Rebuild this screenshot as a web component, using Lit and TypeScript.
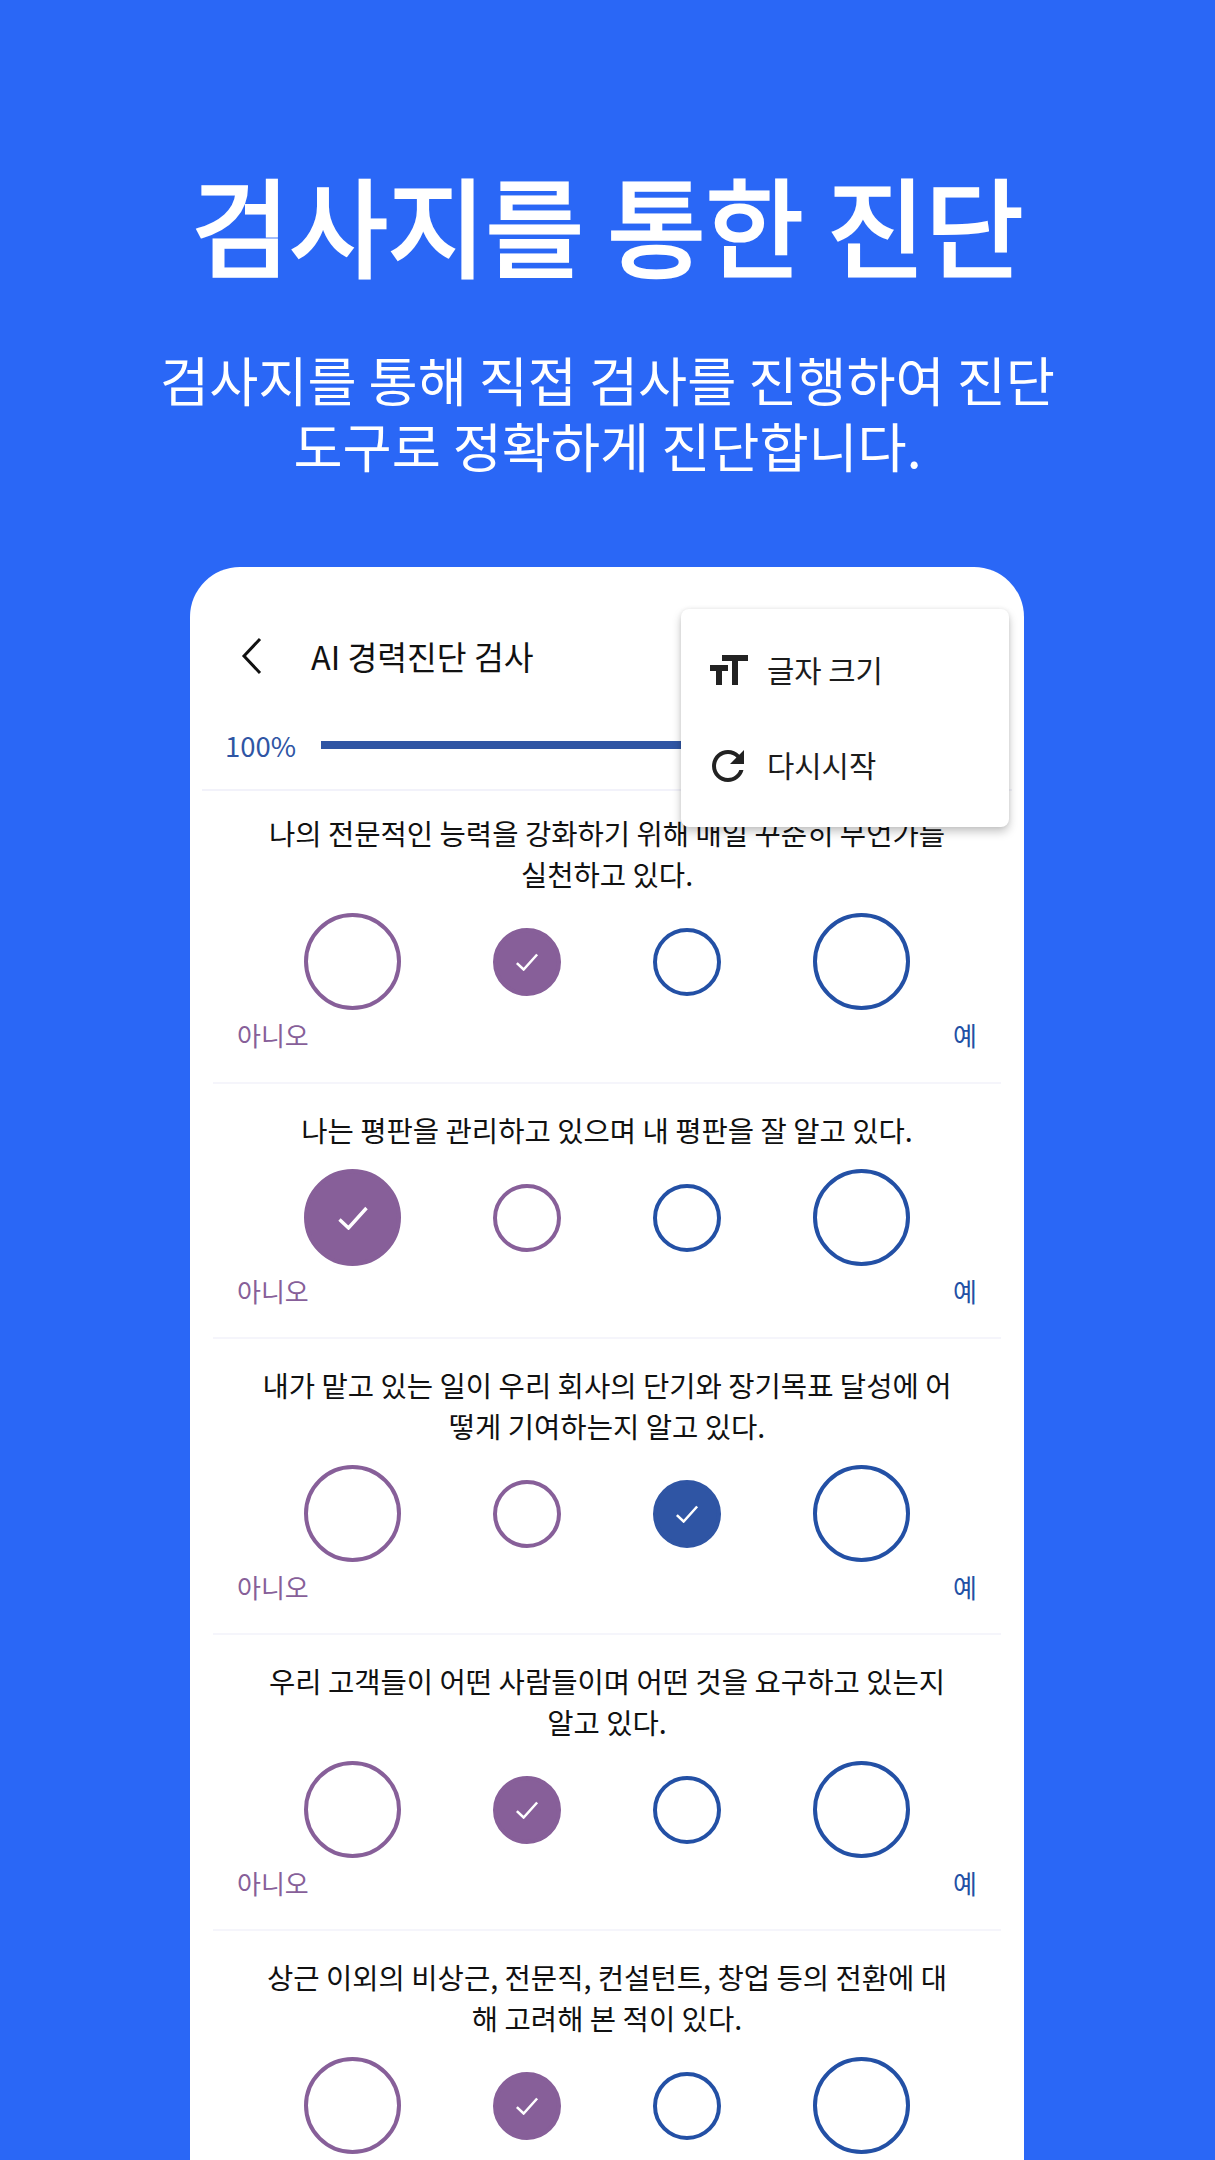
import { LitElement, html, css, svg } from "lit";
import { customElement } from "lit/decorators.js";
import { classMap } from "lit/directives/class-map.js";

interface Question { lines: string[]; picked: number; labels: boolean; }

const QUESTIONS: Question[] = [
  { lines: ["나의 전문적인 능력을 강화하기 위해 매일 꾸준히 무언가를", "실천하고 있다."], picked: 1, labels: true },
  { lines: ["나는 평판을 관리하고 있으며 내 평판을 잘 알고 있다."], picked: 0, labels: true },
  { lines: ["내가 맡고 있는 일이 우리 회사의 단기와 장기목표 달성에 어", "떻게 기여하는지 알고 있다."], picked: 2, labels: true },
  { lines: ["우리 고객들이 어떤 사람들이며 어떤 것을 요구하고 있는지", "알고 있다."], picked: 1, labels: true },
  { lines: ["상근 이외의 비상근, 전문직, 컨설턴트, 창업 등의 전환에 대", "해 고려해 본 적이 있다."], picked: 1, labels: false },
];

const check = svg`<path d="M3 13.5 L12 22 L30 2" fill="none" stroke="#fff" stroke-width="3.4"/>`;

@customElement("app-root")
export class AppRoot extends LitElement {
  static styles = css`
    :host {
      display: block;
      width: 1215px;
      height: 2160px;
      overflow: hidden;
      background: #2a67f6;
      font-family: "Noto Sans CJK KR", "Noto Sans", sans-serif;
      color: #111;
    }
    .hero { padding-top: 163px; text-align: center; color: #fff; }
    h1 { margin: 0; font-size: 106.5px; line-height: 120px; font-weight: 400; -webkit-text-stroke: 3.2px #fff; }
    .sub { margin: 63px 0 0; font-size: 53.4px; line-height: 66px; font-weight: 400; }
    .card {
      position: relative;
      width: 834px;
      margin: 89px 0 0 190px;
      background: #fff;
      border-radius: 50px 50px 0 0;
      padding-top: 1px;
    }
    .top { display: flex; align-items: center; height: 45px; padding: 65px 0 0 50px; }
    .top svg { width: 24px; height: 38px; display: block; }
    .top span { margin-left: 47px; font-size: 32.4px; line-height: 45px; }
    .progress {
      display: flex;
      align-items: center;
      gap: 25px;
      height: 36px;
      padding: 49px 35px 26px 23px;
      margin: 0 12px;
      border-bottom: 2px solid #f2f2fa;
    }
    .progress .pct { font-size: 27.5px; color: #2f55a4; line-height: 36px; }
    .progress .bar { flex: 1; height: 8px; background: #2f55a4; }
    .menu {
      position: absolute;
      top: 42px;
      left: 491px;
      width: 328px;
      box-sizing: border-box;
      padding: 14px 0;
      background: #fff;
      border-radius: 8px;
      box-shadow: 0 5px 10px rgba(0,0,0,.22), 0 0 4px rgba(0,0,0,.08);
    }
    .item { display: flex; align-items: center; height: 95px; padding-left: 23px; gap: 15px; font-size: 29.7px; color: #1c1c1c; }
    .item span { position: relative; top: -1px; }
    .item svg { width: 48px; height: 48px; fill: #222; display: block; }
    .row { margin: 0 23px; padding: 25px 0 28px; border-bottom: 2px solid #f5f5fb; }
    .row.first { padding: 21px 0 29px; }
    .q { margin: 0; text-align: center; font-size: 28.6px; line-height: 41px; color: #111; }
    .dots { display: flex; justify-content: center; align-items: center; gap: 92px; margin-top: 19px; }
    .dot {
      box-sizing: border-box;
      width: 68px;
      height: 68px;
      border-radius: 50%;
      border: 4.5px solid;
      display: flex;
      align-items: center;
      justify-content: center;
    }
    .dot.big { width: 97px; height: 97px; }
    .dot.p { border-color: #875f99; }
    .dot.b { border-color: #2350a5; }
    .dot.p.on { background: #875f99; }
    .dot.b.on { background: #2f55a4; border-color: #2f55a4; }
    .dot svg { width: 26px; height: 18px; display: block; }
    .dot.big svg { width: 34px; height: 24px; }
    .labels { display: flex; justify-content: space-between; padding: 0 24px; margin-top: 7px; font-size: 26px; line-height: 36px; }
    .no { color: #875f99; }
    .yes { color: #2350a5; }
  `;

  private dot(i: number, picked: number) {
    const cls = { dot: true, big: i === 0 || i === 3, p: i < 2, b: i >= 2, on: i === picked };
    return html`<div class=${classMap(cls)}>
      ${i === picked ? html`<svg viewBox="0 0 33 24">${check}</svg>` : ""}
    </div>`;
  }

  render() {
    return html`
      <div class="hero">
        <h1>검사지를 통한 진단</h1>
        <p class="sub">검사지를 통해 직접 검사를 진행하여 진단<br />도구로 정확하게 진단합니다.</p>
      </div>
      <div class="card">
        <div class="top">
          <svg viewBox="0 0 24 38"><path d="M20 2 L4 19 L20 36" fill="none" stroke="#111" stroke-width="3"/></svg>
          <span>AI 경력진단 검사</span>
        </div>
        <div class="progress">
          <span class="pct">100%</span>
          <div class="bar"></div>
        </div>
        ${QUESTIONS.map((q, n) => html`
          <div class=${classMap({ row: true, first: n === 0 })}>
            <p class="q">${q.lines.map((l, i) => html`${i ? html`<br />` : ""}${l}`)}</p>
            <div class="dots">${[0, 1, 2, 3].map((i) => this.dot(i, q.picked))}</div>
            ${q.labels ? html`<div class="labels"><span class="no">아니오</span><span class="yes">예</span></div>` : ""}
          </div>
        `)}
        <div class="menu">
          <div class="item">
            <svg viewBox="0 0 24 24"><path d="M9 4v3h5v12h3V7h5V4H9zm-6 8h3v7h3v-7h3V9H3v3z"/></svg>
            <span>글자 크기</span>
          </div>
          <div class="item">
            <svg viewBox="0 0 24 24"><path d="M17.65 6.35C16.2 4.9 14.21 4 12 4c-4.42 0-7.99 3.58-7.99 8s3.57 8 7.99 8c3.73 0 6.84-2.55 7.73-6h-2.08c-.82 2.33-3.04 4-5.65 4-3.31 0-6-2.69-6-6s2.69-6 6-6c1.66 0 3.14.69 4.22 1.78L13 11h7V4l-2.35 2.35z"/></svg>
            <span>다시시작</span>
          </div>
        </div>
      </div>
    `;
  }
}
